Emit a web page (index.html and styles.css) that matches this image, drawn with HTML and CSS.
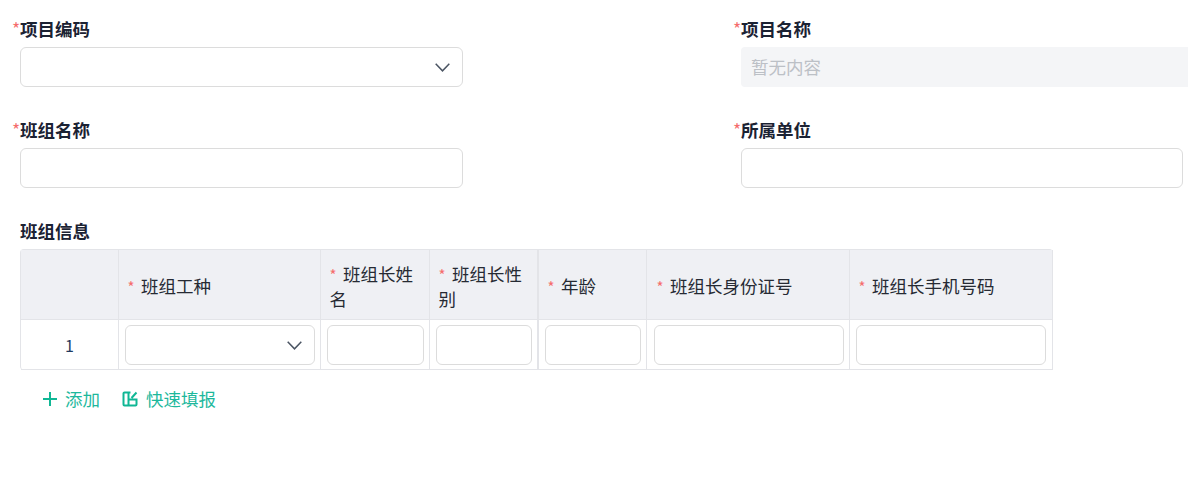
FILE: index.html
```html
<!DOCTYPE html>
<html lang="zh">
<head>
<meta charset="utf-8">
<title>班组</title>
<link rel="stylesheet" href="styles.css">
</head>
<body>
<div class="page">
  <div class="form-grid">
    <div class="field">
      <div class="label"><span class="star">*</span>项目编码</div>
      <div class="control select">
        <svg class="chevron" viewBox="0 0 15 9"><path d="M.7.7 7.5 7.8 14.3.7"/></svg>
      </div>
    </div>
    <div class="field">
      <div class="label"><span class="star">*</span>项目名称</div>
      <div class="control disabled">暂无内容</div>
    </div>
    <div class="field">
      <div class="label"><span class="star">*</span>班组名称</div>
      <div class="control"></div>
    </div>
    <div class="field">
      <div class="label"><span class="star">*</span>所属单位</div>
      <div class="control short"></div>
    </div>
  </div>
  <div class="section-title">班组信息</div>
  <table class="team-table">
    <colgroup>
      <col class="c-index"><col class="c-type"><col class="c-name"><col class="c-gender"><col class="c-age"><col class="c-id"><col class="c-phone">
    </colgroup>
    <thead>
      <tr>
        <th></th>
        <th><span class="th-star">*</span>班组工种</th>
        <th><span class="th-star">*</span>班组长姓名</th>
        <th><span class="th-star">*</span>班组长性别</th>
        <th class="thick-left"><span class="th-star">*</span>年龄</th>
        <th class="id-head"><span class="th-star">*</span>班组长身份证号</th>
        <th><span class="th-star">*</span>班组长手机号码</th>
      </tr>
    </thead>
    <tbody>
      <tr>
        <td class="index">1</td>
        <td><div class="control select">
          <svg class="chevron" viewBox="0 0 15 9"><path d="M.7.7 7.5 7.8 14.3.7"/></svg>
        </div></td>
        <td><div class="control"></div></td>
        <td><div class="control"></div></td>
        <td class="thick-left"><div class="control"></div></td>
        <td class="id-cell"><div class="control"></div></td>
        <td class="phone-cell"><div class="control"></div></td>
      </tr>
    </tbody>
  </table>
  <div class="actions">
    <button class="action add" type="button">
      <svg class="icon-plus" viewBox="0 0 14 14"><path d="M7 0v14M0 7h14"/></svg>添加
    </button>
    <button class="action" type="button">
      <svg class="icon-fill" viewBox="0 0 16 16"><path d="M8.5 1.5h-6a1 1 0 0 0-1 1v11a1 1 0 0 0 1 1h11a1 1 0 0 0 1-1V8.5H6.5M6.5 1.5v13M9.5 7 14.5 1.5"/></svg>快速填报
    </button>
  </div>
</div>
</body>
</html>
```

FILE: styles.css
```css
* { box-sizing: border-box; }
html, body { margin: 0; padding: 0; background: #fff; overflow: hidden; }
body {
  font-family: "Noto Sans CJK SC", "Noto Sans", sans-serif;
  font-size: 17.5px;
  color: #1f2430;
}
.page { width: 1188px; height: 495px; padding-top: 17px; overflow: hidden; }
.form-grid {
  display: grid;
  grid-template-columns: 721px 467px;
  row-gap: 31px;
}
.field { padding-left: 20px; position: relative; }
.label {
  position: relative;
  height: 30px;
  line-height: 23px;
  font-weight: 600;
  color: #1b2233;
}
.star {
  position: absolute;
  left: -8px;
  top: 0;
  color: #f56c6c;
  font-weight: 400;
}
.control {
  position: relative;
  height: 40px;
  width: 100%;
  border: 1px solid #dcdcdc;
  border-radius: 6px;
  background: #fff;
}
.field .control { width: 443px; }
.field .control.short { width: 442px; }
.field .control.disabled {
  width: 447px;
  border: 0;
  border-radius: 4px 0 0 4px;
  background: #f4f5f7;
  color: #bcc0c6;
  line-height: 40px;
  padding-left: 10px;
}
.chevron {
  position: absolute;
  right: 12px;
  top: 15px;
  width: 15px;
  height: 9px;
  fill: none;
  stroke: #4b5563;
  stroke-width: 1.5;
}
.section-title {
  margin: 29px 0 0 20px;
  height: 32px;
  line-height: 27px;
  font-weight: 600;
  color: #1b2233;
}
.team-table {
  margin-left: 20px;
  width: 1032px;
  table-layout: fixed;
  border-collapse: separate;
  border-spacing: 0;
  border-top: 1px solid #e3e4e8;
  border-left: 1px solid #e3e4e8;
  border-radius: 4px;
}
.c-index { width: 98px; }
.c-type { width: 202px; }
.c-name { width: 109px; }
.c-gender { width: 108px; }
.c-age { width: 109px; }
.c-id { width: 203px; }
.c-phone { width: 203px; }
.team-table th {
  height: 70px;
  background: #eff0f4;
  font-weight: 400;
  text-align: left;
  padding: 2px 6px 0 8.5px;
  line-height: 25px;
  border-right: 1px solid #e3e4e8;
  border-bottom: 1px solid #e3e4e8;
  color: #262a33;
}
.team-table th.id-head { padding-left: 9.5px; }
.team-table td {
  height: 50px;
  padding: 5px 5px 4px 6px;
  border-right: 1px solid #e3e4e8;
  border-bottom: 1px solid #e3e4e8;
}
.team-table th.thick-left, .team-table td.thick-left { border-left: 1px solid #e3e4e8; }
.team-table td.id-cell { padding-left: 7px; }
.team-table td.phone-cell { padding-right: 6px; }
.team-table td.index { text-align: center; color: #1f3a5f; padding: 0; font-size: 16px; }
.th-star { color: #f56c6c; margin-right: 6.5px; font-size: 15px; line-height: 1; }
.actions {
  display: flex;
  align-items: center;
  gap: 22px;
  margin: 16px 0 0 43px;
  height: 26px;
}
.action {
  display: flex;
  align-items: center;
  gap: 8px;
  padding: 0;
  border: 0;
  background: none;
  color: #1db89c;
  font: inherit;
  line-height: 26px;
}
.icon-plus { width: 14px; height: 14px; fill: none; stroke: #10b795; stroke-width: 2; }
.icon-fill { width: 16px; height: 16px; fill: none; stroke: #10b795; stroke-width: 2; }
```
